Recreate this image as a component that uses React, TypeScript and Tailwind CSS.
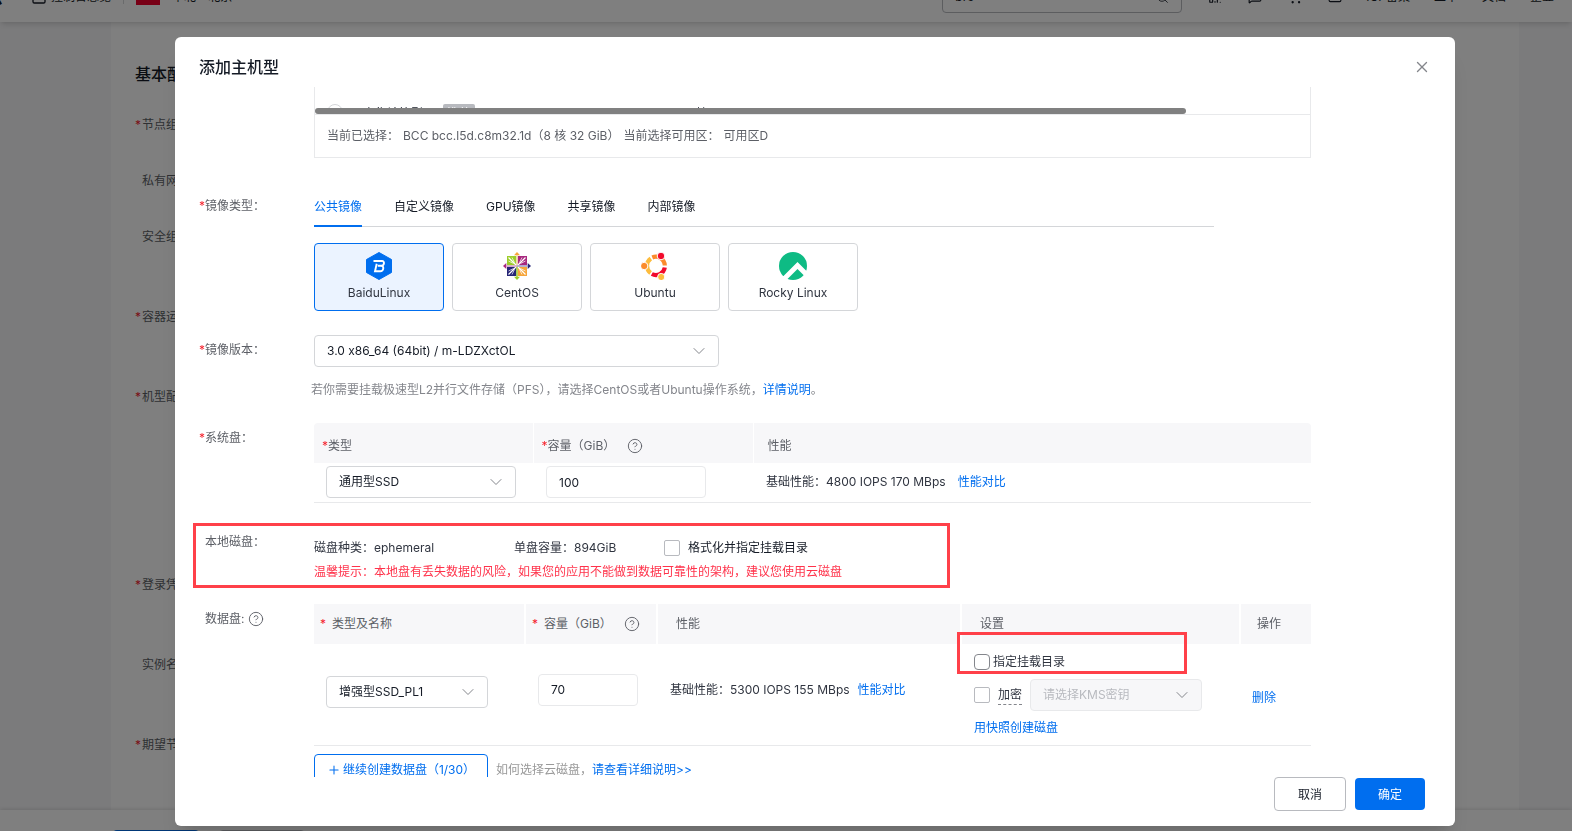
import type { ReactNode } from "react";
import {
  ChevronDown,
  CircleHelp,
  Mail,
  MessageSquare,
  Plus,
  QrCode,
  Search,
  ShoppingCart,
  Square,
  X,
} from "lucide-react";

interface OsOption {
  name: string;
  logo: ReactNode;
}

const pageFields = [
  { label: "节点组名称：", required: true, space: "mt-[29px]" },
  { label: "私有网络：", required: false, space: "mt-9" },
  { label: "安全组：", required: false, space: "mt-9" },
  { label: "容器运行时：", required: true, space: "mt-[60px]" },
  { label: "机型配置：", required: true, space: "mt-[60px]" },
  { label: "登录凭证：", required: true, space: "mt-[168px]" },
  { label: "实例名称：", required: false, space: "mt-[60px]" },
  { label: "期望节点数：", required: true, space: "mt-[60px]" },
];

const tabs = ["公共镜像", "自定义镜像", "GPU镜像", "共享镜像", "内部镜像"];

function BaiduLogo() {
  return (
    <svg viewBox="0 0 28 28" className="size-7">
      <path
        d="M14 0.5 L26.5 7.5 V20.5 L14 27.5 L1.5 20.5 V7.5 Z"
        fill="#006eef"
        stroke="#006eef"
        strokeLinejoin="round"
      />
      <path
        d="M8.500 9h8.600c2.800 0 2.400 4.500-.8 4.800h-3.500M16.300 13.800c3.200 .2 2.300 5.400-1 5.400h-5.300l1.700-7.400"
        fill="none"
        stroke="#fff"
        strokeWidth="1.9"
      />
    </svg>
  );
}

function CentosLogo() {
  return (
    <svg viewBox="0 0 28 28" className="size-7">
      <path d="M4 4h9.300v9.300H4z" fill="#9ccd2a" />
      <path d="M14.700 4H24v9.300h-9.300z" fill="#a8287f" />
      <path d="M4 14.700h9.300V24H4z" fill="#262577" />
      <path d="M14.700 14.700H24V24h-9.300z" fill="#f6a53a" />
      <path d="M14 0l3 3.300h-6z" fill="#f6a53a" />
      <path d="M14 28l3-3.300h-6z" fill="#9ccd2a" />
      <path d="M0 14l3.300-3v6z" fill="#a8287f" />
      <path d="M28 14l-3.300-3v6z" fill="#262577" />
      <path
        d="M5.500 5.500l17 17M22.500 5.500l-17 17"
        stroke="#fff"
        strokeWidth="1.2"
      />
      <path
        d="M9 5.500l2.500 5M5.500 9l5 2.500M19 5.500l-2.500 5M22.500 9l-5 2.500M9 22.500l2.500-5M5.500 19l5-2.500M19 22.500l-2.500-5M22.500 19l-5-2.500"
        stroke="#fff"
        strokeWidth="0.7"
      />
      <path d="M14 3v11" stroke="#f6d3a0" strokeWidth="1.400" />
      <path d="M14 14v11" stroke="#9ccd2a" strokeWidth="1.400" />
      <path d="M3 14h11" stroke="#d9a5cb" strokeWidth="1.6" />
      <path d="M14 14h11" stroke="#a5a4d0" strokeWidth="1.6" />
    </svg>
  );
}

function UbuntuLogo() {
  return (
    <svg viewBox="0 0 28 28" className="size-7">
      <g fill="none" strokeWidth="4.200">
        <path d="M11.300 5.500A9 9 0 0 1 23.800 13.500" stroke="#fb8b2c" />
        <path d="M23.800 15.500A9 9 0 0 1 10.800 22" stroke="#f20a2b" />
        <path d="M9.600 21A9 9 0 0 1 9.800 6.500" stroke="#fdbc3d" />
      </g>
      <g stroke="#fff" strokeWidth="1">
        <circle cx="20" cy="4" r="3.800" fill="#f20a2b" />
        <circle cx="3.200" cy="14" r="3.700" fill="#fb8b2c" />
        <circle cx="20.200" cy="25" r="3.600" fill="#fdbc3d" />
      </g>
    </svg>
  );
}

function RockyLogo() {
  return (
    <svg viewBox="0 0 28 28" className="size-7">
      <defs>
        <clipPath id="rocky">
          <circle cx="14" cy="14" r="14" />
        </clipPath>
      </defs>
      <g clipPath="url(#rocky)" fill="#0ebb84">
        <path d="M0 0h28v19.500L18.500 10 4.500 24H0z" />
        <path d="M18.500 17l6.500 6.500V28H7.500z" />
      </g>
    </svg>
  );
}

const osOptions: OsOption[] = [
  { name: "BaiduLinux", logo: <BaiduLogo /> },
  { name: "CentOS", logo: <CentosLogo /> },
  { name: "Ubuntu", logo: <UbuntuLogo /> },
  { name: "Rocky Linux", logo: <RockyLogo /> },
];

function Star() {
  return <span className="text-[#f5222d]">*</span>;
}

function HelpIcon() {
  return <CircleHelp size={16} strokeWidth={1.4} className="text-[#5c5f66]" />;
}

function Field({
  label,
  required,
  labelClass = "",
  className = "",
  children,
}: {
  label: ReactNode;
  required?: boolean;
  labelClass?: string;
  className?: string;
  children: ReactNode;
}) {
  return (
    <section className={`relative flex ${className}`}>
      <div className={`flex w-[115px] shrink-0 text-[#5c5f66] ${labelClass}`}>
        <span className="w-1.5">{required && <Star />}</span>
        {label}
      </div>
      <div className="min-w-0 flex-1">{children}</div>
    </section>
  );
}

function Select({
  label,
  value,
  width,
  disabled,
}: {
  label: string;
  value: string;
  width: string;
  disabled?: boolean;
}) {
  return (
    <div className={`relative ${width}`}>
      <select
        aria-label={label}
        disabled={disabled}
        className="h-8 w-full appearance-none rounded border border-[#d4d6d9] bg-white px-3 text-[#151b26] disabled:border-[#e8e9eb] disabled:bg-[#f7f7f9] disabled:text-[#b8babf] disabled:opacity-100"
      >
        <option>{value}</option>
      </select>
      <ChevronDown
        size={20}
        strokeWidth={1.2}
        className="pointer-events-none absolute top-1.5 right-2.5 text-[#84868c]"
      />
    </div>
  );
}

function PageHeader() {
  return (
    <header className="relative -mt-7 flex h-[50px] items-center bg-white text-[#151b26] shadow-md">
      <span className="flex w-[3px] justify-end overflow-hidden text-lg font-bold">云</span>
      <Square size={16} className="ml-7" />
      <a href="#" className="ml-1">控制台总览</a>
      <span className="ml-3 h-3.5 w-px bg-[#d4d6d9]" />
      <span className="ml-3 h-4 w-6 bg-[#f0002d]" />
      <span className="ml-3">华北 - 北京</span>
      <label className="ml-auto flex h-8 w-60 items-center rounded border border-[#b8babf] px-3">
        <input aria-label="搜索" defaultValue="bre" className="min-w-0 flex-1 outline-none" />
        <Search size={13} strokeWidth={1.5} />
      </label>
      <nav className="flex items-center pr-[18px]">
        <QrCode size={14} className="ml-[26px]" />
        <MessageSquare size={14} className="ml-[26px]" />
        <ShoppingCart size={14} className="ml-[26px]" />
        <Mail size={14} className="ml-[26px]" />
        <a href="#" className="ml-6">ICP备案</a>
        <a href="#" className="ml-6">工单</a>
        <a href="#" className="ml-6">文档</a>
        <a href="#" className="ml-6">企业</a>
      </nav>
    </header>
  );
}

function SystemDisk() {
  return (
    <table className="w-full table-fixed border-collapse text-left">
      <thead className="h-10 text-[#5c5f66]">
        <tr className="[&>th]:bg-[#f7f7f9] [&>th]:pt-1.5 [&>th]:font-normal">
          <th className="w-[219px] rounded-tl pl-2"><Star />类型</th>
          <th className="w-[220px] border-l border-white pl-2">
            <span className="flex items-center">
              <Star />容量（GiB）<span className="ml-3"><HelpIcon /></span>
            </span>
          </th>
          <th className="rounded-tr border-l border-white pl-3.5">性能</th>
        </tr>
      </thead>
      <tbody>
        <tr className="h-[39px] border-b border-[#e8e9eb] align-top">
          <td className="pt-[3px] pl-3">
            <Select label="系统盘类型" value="通用型SSD" width="w-[190px]" />
          </td>
          <td className="pt-[3px] pl-[13px]">
            <input
              aria-label="系统盘容量"
              defaultValue="100"
              className="h-8 w-40 rounded border border-[#e8e9eb] px-3 text-[#151b26]"
            />
          </td>
          <td className="pt-[9px] pl-[13px]">
            基础性能：4800 IOPS 170 MBps
            <a href="#" className="ml-3 text-[#006eef]">性能对比</a>
          </td>
        </tr>
      </tbody>
    </table>
  );
}

function DataDisk() {
  return (
    <table className="w-full table-fixed border-collapse text-left">
      <thead className="h-10 text-[#5c5f66]">
        <tr className="[&>th]:bg-[#f7f7f9] [&>th]:font-normal">
          <th className="w-[211px] pl-1.5"><Star /><span className="ml-1.5">类型及名称</span></th>
          <th className="w-[132px] border-l-2 border-white pl-1.5">
            <span className="flex items-center">
              <Star /><span className="ml-1.5">容量（GiB）</span>
              <span className="ml-3"><HelpIcon /></span>
            </span>
          </th>
          <th className="border-l-2 border-white pl-[18px]">性能</th>
          <th className="w-[279px] border-l-2 border-white pl-[18px]">设置</th>
          <th className="w-[71px] border-l-2 border-white pl-4">操作</th>
        </tr>
      </thead>
      <tbody>
        <tr className="border-b border-[#e8e9eb] align-top">
          <td className="pt-8 pl-3">
            <Select label="数据盘类型" value="增强型SSD_PL1" width="w-[162px]" />
          </td>
          <td className="pt-[30px] pl-[13px]">
            <input
              aria-label="数据盘容量"
              defaultValue="70"
              className="h-8 w-[100px] rounded border border-[#e8e9eb] px-3 text-[#151b26]"
            />
          </td>
          <td className="pt-9 pl-[13px]">
            基础性能：5300 IOPS 155 MBps
            <a href="#" className="ml-2 text-[#006eef]">性能对比</a>
          </td>
          <td className="relative pt-2 pb-[7px] pl-[13px]">
            <label className="flex h-5 items-center gap-[3px]">
              <input type="checkbox" className="size-4 appearance-none rounded border border-[#84868c] bg-white" />
              指定挂载目录
            </label>
            <div className="mt-[7px] flex h-8 items-center">
              <label className="flex items-center gap-2">
                <input type="checkbox" className="size-4 appearance-none rounded-xs border border-[#b8babf] bg-white" />
                <span className="h-5 border-b border-dashed border-[#84868c]">加密</span>
              </label>
              <div className="ml-2">
                <Select label="KMS密钥" value="请选择KMS密钥" width="w-[172px]" disabled />
              </div>
            </div>
            <a href="#" className="mt-[7px] block h-5 text-[#006eef]">用快照创建磁盘</a>
            <span className="pointer-events-none absolute -top-3 -left-1 h-[42px] w-[230px] border-3 border-[#ff4049]" />
          </td>
          <td className="pt-11 pl-3">
            <button className="text-[#006eef]">删除</button>
          </td>
        </tr>
      </tbody>
    </table>
  );
}

function HostDialog() {
  return (
    <div
      role="dialog"
      aria-label="添加主机型"
      className="flex w-full flex-col overflow-hidden rounded-md bg-white text-[#303540] shadow-xl"
    >
      <header className="flex h-[50px] shrink-0 items-center justify-between pt-2.5 pr-6 pl-6">
        <h2 className="text-base font-medium text-[#151b26]">添加主机型</h2>
        <button aria-label="关闭" className="text-[#84868c]">
          <X size={18} strokeWidth={1.8} />
        </button>
      </header>

      <div className="min-h-0 flex-1 overflow-hidden pr-36 pl-6">
        <div className="ml-[115px] border border-t-0 border-[#e8e9eb]">
          <div className="relative h-7 overflow-hidden border-b border-[#e8e9eb] pt-[17px]">
            <div className="flex items-start whitespace-nowrap pl-3">
              <input type="radio" aria-label="密集计算型l5d" className="size-4 appearance-none rounded-full border border-[#d4d6d9]" />
              <span className="ml-5 text-[#151b26]">密集计算型l5d</span>
              <span className="ml-0.5 rounded-xs bg-[#b8babf] px-1 text-white">推荐</span>
              <span className="ml-6 text-[#84868c]">bcc.l5d.c8m32.1d</span>
              <span className="ml-[90px]">8核</span>
              <span className="ml-12 text-[#84868c]">32GiB</span>
            </div>
            <span className="absolute bottom-0 left-0 h-1.5 w-7/8 rounded-full bg-[#808080]" />
          </div>
          <p className="flex h-[42px] items-center gap-1 px-3 text-[#5c5f66]">
            <span>当前已选择：</span>
            <span>BCC bcc.l5d.c8m32.1d（8 核 32 GiB）</span>
            <span>当前选择可用区：</span>
            <span>可用区D</span>
          </p>
        </div>

        <Field label="镜像类型：" required labelClass="pt-2.5" className="mt-7">
          <div className="flex h-[41px] w-[900px] max-w-full gap-8 border-b border-[#d4d6d9]" role="tablist">
            {tabs.map((tab, i) => (
              <button
                key={tab}
                role="tab"
                aria-selected={i === 0}
                className="-mb-px flex border-b-2 border-transparent pt-[11px] text-[#151b26] aria-selected:border-[#006eef] aria-selected:text-[#006eef]"
              >
                {tab}
              </button>
            ))}
          </div>
          <div className="mt-4 flex gap-2">
            {osOptions.map((os, i) => (
              <button
                key={os.name}
                aria-pressed={i === 0}
                className="flex h-[68px] w-[130px] flex-col items-center rounded border border-[#d4d6d9] pt-2 aria-pressed:border-[#006eef] aria-pressed:bg-[#ebf3ff]"
              >
                {os.logo}
                <span className="mt-[3px]">{os.name}</span>
              </button>
            ))}
          </div>
        </Field>

        <Field label="镜像版本：" required labelClass="pt-[5px]" className="mt-6">
          <Select label="镜像版本" value="3.0 x86_64 (64bit) / m-LDZXctOL" width="w-[405px]" />
          <p className="mt-[13px] -ml-[3px] h-5 text-[#84868c]">
            若你需要挂载极速型L2并行文件存储（PFS），请选择CentOS或者Ubuntu操作系统，
            <a href="#" className="text-[#006eef]">详情说明</a>。
          </p>
        </Field>

        <Field label="系统盘：" required labelClass="pt-[5px]" className="mt-[23px]">
          <SystemDisk />
        </Field>

        <Field label="本地磁盘：" labelClass="pt-px" className="mt-7">
          <div className="flex h-[27px] items-end">
            <span className="w-[200px]">磁盘种类：ephemeral</span>
            <span className="w-[150px]">单盘容量：894GiB</span>
            <label className="flex items-center gap-2 text-[#151b26]">
              <input type="checkbox" className="size-4 appearance-none rounded-xs border border-[#b8babf] bg-white" />
              格式化并指定挂载目录
            </label>
          </div>
          <p className="mt-1 h-5 text-[#ff334b]">
            温馨提示：本地盘有丢失数据的风险，如果您的应用不能做到数据可靠性的架构，建议您使用云磁盘
          </p>
          <span className="pointer-events-none absolute -top-2 -bottom-1.5 -left-1.5 w-[757px] border-3 border-[#ff4049]" />
        </Field>

        <Field
          label={<span className="flex h-5 items-center">数据盘:<span className="ml-1"><HelpIcon /></span></span>}
          labelClass="pt-[5px]"
          className="mt-[22px]"
        >
          <DataDisk />
          <div className="mt-2 flex h-8 items-center">
            <button className="flex h-8 w-[174px] items-center justify-center gap-0.5 rounded border border-[#006eef] text-[#006eef]">
              <Plus size={14} strokeWidth={1.8} />
              继续创建数据盘（1/30）
            </button>
            <span className="ml-2 text-[#999]">如何选择云磁盘，</span>
            <a href="#" className="text-[#006eef]">请查看详细说明&gt;&gt;</a>
          </div>
        </Field>
      </div>

      <footer className="flex h-[49px] shrink-0 items-start justify-end gap-[9px] pr-[30px]">
        <button className="h-[34px] w-[72px] rounded border border-[#b8babf] pt-0.5 text-[#151b26]">取消</button>
        <button className="mt-px h-8 w-[70px] rounded bg-[#006eef] pt-0.5 text-white">确定</button>
      </footer>
    </div>
  );
}

export default function App() {
  return (
    <div className="relative flex h-screen flex-col overflow-hidden bg-[#f7f7f9] font-['Inter','Noto_Sans_CJK_SC',sans-serif] text-xs leading-5">
      <PageHeader />
      <main className="mr-[53px] ml-[111px] min-h-0 flex-1 overflow-hidden bg-white px-6 pt-10">
        <h1 className="h-6 text-base leading-6 font-medium text-[#151b26]">基本配置</h1>
        {pageFields.map((field) => (
          <p key={field.label} className={`flex h-5 text-[#5c5f66] ${field.space}`}>
            <span className="w-[7px]">{field.required && <Star />}</span>
            {field.label}
          </p>
        ))}
      </main>
      <footer className="flex h-[21px] shrink-0 gap-5 overflow-hidden bg-white pt-5 pl-[113px] shadow-[0_-1px_4px_rgba(0,0,0,0.12)]">
        <button className="h-8 w-[86px] rounded bg-[#006eef] text-white">下一步</button>
        <button className="h-8 w-[86px] rounded border border-[#b8babf]">取消</button>
      </footer>

      <div className="fixed inset-0 flex bg-black/50 pt-[37px] pr-[117px] pb-[5px] pl-[175px]">
        <HostDialog />
      </div>
    </div>
  );
}
